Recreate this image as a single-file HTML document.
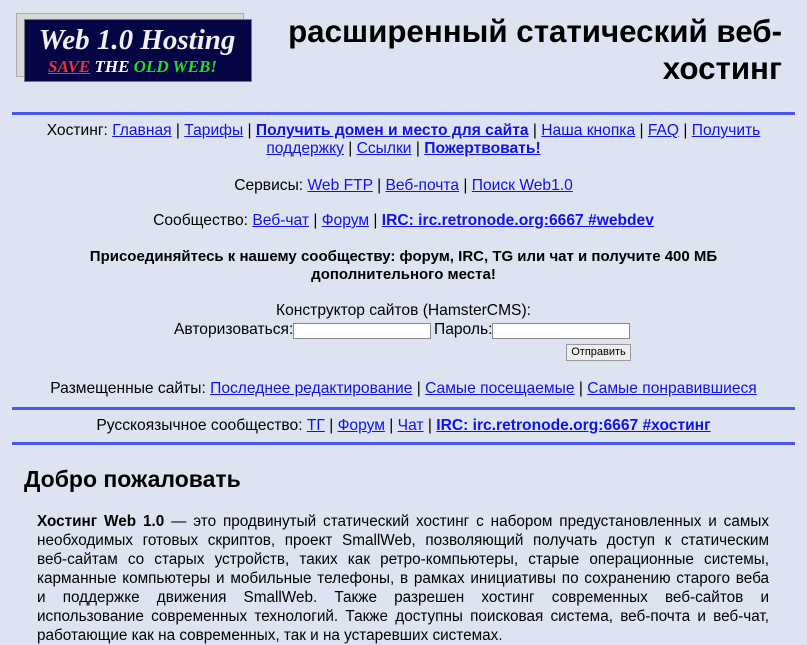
<!DOCTYPE html>
<html><head><meta charset="utf-8"><style>
body{margin:0;background:#dde3f0;font-family:"Liberation Sans",sans-serif;font-size:15.6px;color:#000;width:807px;height:645px;overflow:hidden;position:relative}
a{color:#1111ee;text-decoration:underline}
.abs{position:absolute}
.c{position:absolute;left:40px;width:727px;text-align:center;line-height:18px}
hr{position:absolute;left:12px;width:783px;height:3px;background:#4a55f0;border:0;margin:0}
input.t{position:absolute;width:136px;height:14px;border:1px solid #888;background:#fff;padding:0}
.p div{text-align:justify;text-align-last:justify;white-space:nowrap}
.p div.l{text-align-last:left}
</style></head><body>
<div class="abs" style="left:16px;top:13px;width:226px;height:62px;background:#d8d8d8;border:1px solid #aaa"></div>
<div class="abs" style="left:24px;top:19px;width:226px;height:61px;background:#050545;border:1px solid #777"></div>
<div class="abs" style="left:24px;top:24px;width:226px;text-align:center;font-family:'Liberation Serif',serif;font-style:italic;font-weight:bold;color:#f0f0f0;font-size:29px">Web 1.0 Hosting</div>
<div class="abs" style="left:48px;top:57px;font-family:'Liberation Serif',serif;font-style:italic;font-weight:bold;font-size:17px;color:#fff"><span style="color:#e33;text-decoration:underline">SAVE</span> THE <span style="color:#2d2">OLD WEB!</span></div>
<div class="abs" style="left:270px;top:13px;width:530px;text-align:right;font-weight:bold;font-size:31.3px;line-height:37px;padding-right:18px;box-sizing:border-box">расширенный статический веб-<br>хостинг</div>
<hr style="top:112px">
<div class="c" style="top:122px;left:42px;width:723px">Хостинг: <a>Главная</a> | <a>Тарифы</a> | <a><b>Получить домен и место для сайта</b></a> | <a>Наша кнопка</a> | <a>FAQ</a> | <a>Получить поддержку</a> | <a>Ссылки</a> | <a><b>Пожертвовать!</b></a></div>
<div class="c" style="top:177px">Сервисы: <a>Web FTP</a> | <a>Веб-почта</a> | <a>Поиск Web1.0</a></div>
<div class="c" style="top:212px">Сообщество: <a>Веб-чат</a> | <a>Форум</a> | <a><b>IRC: irc.retronode.org:6667 #webdev</b></a></div>
<div class="c" style="top:248px;font-weight:bold;font-size:15px;left:60px;width:687px">Присоединяйтесь к нашему сообществу: форум, IRC, TG или чат и получите 400 МБ дополнительного места!</div>
<div class="c" style="top:302px">Конструктор сайтов (HamsterCMS):</div>
<div class="abs" style="left:174px;top:321px">Авторизоваться:</div>
<input class="t" style="left:293px;top:323px">
<div class="abs" style="left:434px;top:321px">Пароль:</div>
<input class="t" style="left:492px;top:323px">
<div class="abs" style="left:566px;top:344px;width:63px;height:15px;border:1px solid #999;background:#eee;font-size:11px;text-align:center;line-height:15px">Отправить</div>
<div class="c" style="top:380px">Размещенные сайты: <a>Последнее редактирование</a> | <a>Самые посещаемые</a> | <a>Самые понравившиеся</a></div>
<hr style="top:407px">
<div class="c" style="top:417px">Русскоязычное сообщество: <a>ТГ</a> | <a>Форум</a> | <a>Чат</a> | <a><b>IRC: irc.retronode.org:6667 #хостинг</b></a></div>
<hr style="top:442px">
<div class="abs" style="left:24px;top:466px;font-size:23px;font-weight:bold">Добро пожаловать</div>
<div class="abs p" style="left:37px;top:512px;width:732px;line-height:19px;font-size:15.3px">
<div><b>Хостинг Web 1.0</b> — это продвинутый статический хостинг с набором предустановленных и самых</div>
<div>необходимых готовых скриптов, проект SmallWeb, позволяющий получать доступ к статическим</div>
<div>веб-сайтам со старых устройств, таких как ретро-компьютеры, старые операционные системы,</div>
<div>карманные компьютеры и мобильные телефоны, в рамках инициативы по сохранению старого веба</div>
<div>и поддержке движения SmallWeb. Также разрешен хостинг современных веб-сайтов и</div>
<div>использование современных технологий. Также доступны поисковая система, веб-почта и веб-чат,</div>
<div class="l">работающие как на современных, так и на устаревших системах.</div>
</div>
</body></html>
